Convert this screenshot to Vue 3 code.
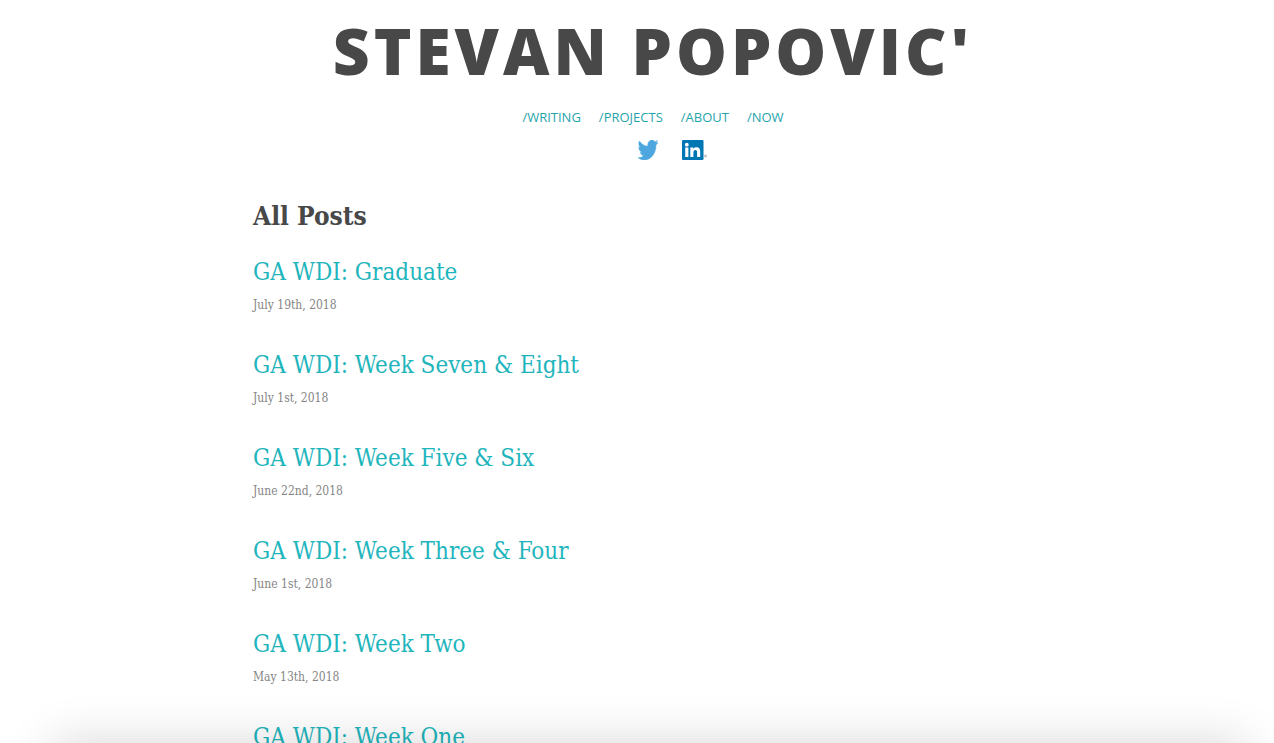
<script setup>
const links = [
  { label: '/WRITING', href: '#writing' },
  { label: '/PROJECTS', href: '#projects' },
  { label: '/ABOUT', href: '#about' },
  { label: '/NOW', href: '#now' },
]

const posts = [
  { title: 'GA WDI: Graduate', date: 'July 19th, 2018' },
  { title: 'GA WDI: Week Seven & Eight', date: 'July 1st, 2018' },
  { title: 'GA WDI: Week Five & Six', date: 'June 22nd, 2018' },
  { title: 'GA WDI: Week Three & Four', date: 'June 1st, 2018' },
  { title: 'GA WDI: Week Two', date: 'May 13th, 2018' },
  { title: 'GA WDI: Week One', date: '' },
]
</script>

<template>
  <div class="page">
    <header class="masthead">
      <h1 class="name">STEVAN POPOVIC'</h1>
      <nav class="nav" aria-label="Main">
        <a v-for="link in links" :key="link.label" :href="link.href">{{ link.label }}</a>
      </nav>
      <div class="social">
        <a href="#twitter" aria-label="Twitter">
          <svg width="20" height="20" viewBox="0 2.2 24 19.6" preserveAspectRatio="none" aria-hidden="true">
            <path fill="#4da7de" stroke="#4da7de" stroke-width="0.5" d="M23.95 4.57a10 10 0 0 1-2.82.77 4.96 4.96 0 0 0 2.16-2.72c-.95.55-2 .96-3.13 1.18a4.92 4.92 0 0 0-8.38 4.48C7.69 8.1 4.07 6.13 1.64 3.16a4.82 4.82 0 0 0-.67 2.48c0 1.71.87 3.21 2.19 4.1a4.9 4.9 0 0 1-2.23-.62v.06a4.92 4.92 0 0 0 3.95 4.83 5 5 0 0 1-2.21.08 4.94 4.94 0 0 0 4.6 3.42A9.87 9.87 0 0 1 0 19.54a13.99 13.99 0 0 0 7.55 2.21c9.05 0 14-7.5 14-13.98 0-.21 0-.42-.02-.63a9.94 9.94 0 0 0 2.46-2.55z" />
          </svg>
        </a>
        <a href="#linkedin" aria-label="LinkedIn">
          <svg width="26" height="20" viewBox="0 0 26 20" aria-hidden="true">
            <rect width="21.5" height="20" rx="1" fill="#0077b5" />
            <circle cx="4.8" cy="4.7" r="1.9" fill="#fff" />
            <path fill="#fff" d="M3.2 7.6h3.2V17H3.2zM8.3 7.6h3v1.3c.6-1 1.6-1.6 3-1.6 3 0 3.9 1.9 3.9 4.5V17h-3.1v-4.5c0-1.3-.3-2.4-1.7-2.4s-2 1-2 2.4V17H8.3z" />
            <circle cx="23.5" cy="16" r="1.5" fill="#c4c4c4" />
          </svg>
        </a>
      </div>
    </header>

    <main>
      <h2 class="heading">All Posts</h2>
      <ul class="posts">
        <li v-for="post in posts" :key="post.title">
          <h3><a href="#post">{{ post.title }}</a></h3>
          <p v-if="post.date">{{ post.date }}</p>
        </li>
      </ul>
    </main>
    <div class="shade" aria-hidden="true"></div>
  </div>
</template>

<style>
html,
body {
  background: #fff;
}

body {
  margin: 0;
  overflow: hidden;
}
</style>

<style scoped>
.page {
  box-sizing: border-box;
  max-width: 832px;
  margin: 0 auto;
  padding-left: 32px;
  color: #484848;
  font-family: "DejaVu Serif Condensed", "DejaVu Serif", serif;
}

.masthead {
  display: flex;
  flex-direction: column;
  align-items: center;
  padding-top: 7px;
  font-family: "Open Sans", sans-serif;
}

.name {
  margin: 0;
  font-size: 64px;
  font-weight: 800;
  line-height: 88px;
  letter-spacing: 4px;
  white-space: nowrap;
}

.nav {
  display: flex;
  gap: 18px;
  margin-top: 12px;
  font-size: 13px;
  line-height: 20px;
}

a {
  color: #1fb5bd;
  text-decoration: none;
}

.nav a {
  color: #1fa5ad;
}

.social {
  display: flex;
  gap: 24px;
  margin: 13px 0 0 40px;
}

.social a,
.social svg {
  display: block;
}

.heading {
  margin: 36px 0 0;
  font-size: 26px;
  line-height: 40px;
}

.posts {
  display: grid;
  gap: 32px;
  margin: 18px 0 0;
  padding: 0;
  list-style: none;
}

.posts h3 {
  margin: 0;
  font-size: 24px;
  font-weight: 400;
  line-height: 36px;
}

.posts p {
  margin: 5px 0 0;
  color: #858585;
  font-size: 12px;
  line-height: 20px;
}

.shade {
  position: fixed;
  right: 28px;
  bottom: -100px;
  left: 52px;
  height: 100px;
  box-shadow: 0 0 50px rgba(0, 0, 0, 0.16);
  pointer-events: none;
}
</style>
